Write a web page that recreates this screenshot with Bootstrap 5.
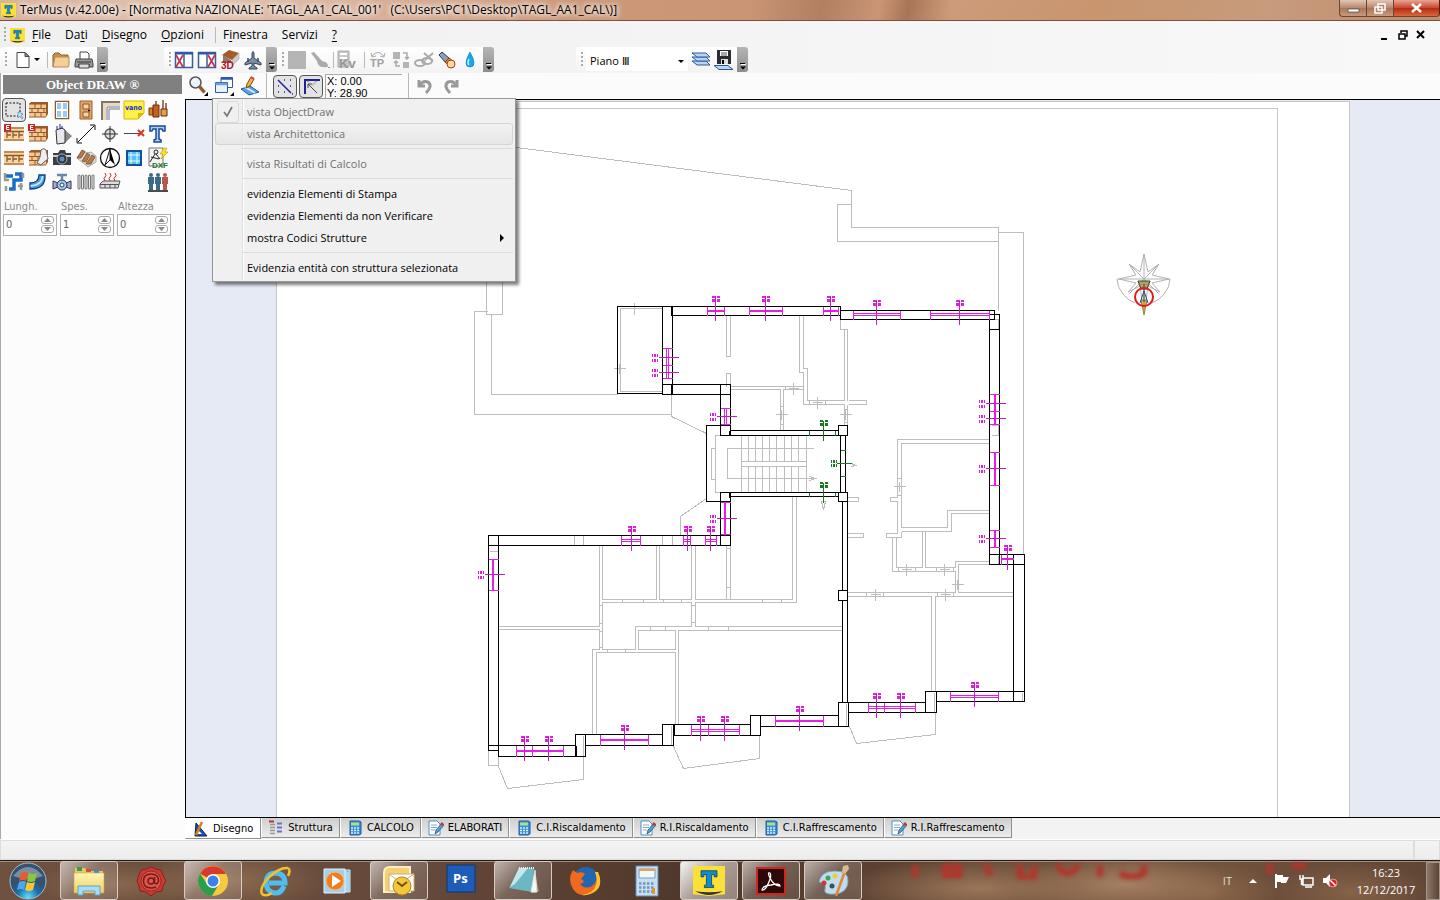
<!DOCTYPE html>
<html lang="it">
<head>
<meta charset="utf-8">
<meta name="viewport" content="width=device-width, initial-scale=1">
<title>TerMus</title>
<link href="https://cdn.jsdelivr.net/npm/bootstrap@5.3.0/dist/css/bootstrap.min.css" rel="stylesheet">
<script defer src="https://cdn.jsdelivr.net/npm/bootstrap@5.3.0/dist/js/bootstrap.bundle.min.js"></script>
<style>
body{font:12px/16px "Open Sans","Noto Sans",sans-serif;color:#000;background:#f4f4f4}
button{border:0;background:none;padding:0;color:inherit;font:inherit}
svg{display:block;flex:none}
.ui-11{font-size:11px}
.tahoma{font:11px/14px "DejaVu Sans Condensed","Liberation Sans",sans-serif}
.ic{width:20px;height:20px}.ic32{width:34px;height:34px}
.titlebar{height:21px;padding-left:1px;background:linear-gradient(100deg,#d9b39b 0,#e0c2b0 14%,#d4a68a 33%,#cc9878 40%,#c99575 52%,#b27f62 57%,#c99575 61%,#a97558 63%,#cd9b7a 66%,#c8956f 76%,#c79b7c 88%,#c08c6c);border-bottom:1px solid #77503f}
.titlebar .cap{white-space:pre;text-shadow:0 0 6px #fff,0 0 8px #fff,0 0 4px #fff}
.winbtns button{height:17px;border:1px solid #6c4534;border-top:0;border-right:0;background:linear-gradient(#e3c6b4,#b4866a 50%,#a97658 52%,#c79a7e);width:27px}
.winbtns button:last-child{width:47px;border-right:1px solid #5a1a10;border-radius:0 0 4px 0;background:linear-gradient(#e8a695,#c8452b 50%,#b32c12 52%,#d9683c)}
.winbtns button:first-child{border-radius:0 0 0 4px}
.menubar{height:26px;padding:2px 6px 0 4px;background:linear-gradient(90deg,#f0f0f0,#f8f8f8)}
.menubar a{color:#000;text-decoration:none;padding:0 7px}
.menubar u{text-underline-offset:2px}
.grip{width:2px;height:16px;background:repeating-linear-gradient(#aaa 0 2px,transparent 2px 4px);flex:none}
.vsep{width:1px;height:16px;background:#b9b9b9;flex:none}
.bars{height:26px;background:linear-gradient(90deg,#f0f0f0,#f8f8f8)}
.tbar{height:25px;gap:3px;border-radius:3px;background:linear-gradient(#fff,#f3f3f3);padding-left:5px}
.bar-nav{margin-left:56px}
.bar-floor{margin-left:82px}
.more{width:11px;height:25px;align-self:stretch;background:linear-gradient(#b5b5b5,#8d8d8d);border-radius:0 3px 3px 0}
.floor{display:block;width:102px;height:22px;border:0;background:#fff;appearance:none;padding:1px 4px 0;font:11px/21px "Open Sans","Noto Sans",sans-serif}
.side{width:185px;background:#fcfcfc;border-left:1px solid #aaa}
.side h1{font:bold 13px/19px "Liberation Serif",serif;background:#808080;color:#fff;margin:2px 3px 4px 2px;height:19px;text-align:center}
.tools{display:grid;grid-template-columns:repeat(7,24px);grid-auto-rows:24px;padding-left:1px}
.tools button.on,.view button.on{border:1px solid #555;border-radius:4px;background:#e3e3e3}
.tools button{display:grid;place-items:center}
.side label{color:#8b8b8b;font:11px/14px "DejaVu Sans Condensed",sans-serif;padding-left:1px}
.spin{border:1px solid #b0b0b0;height:22px;width:54px;background:#fff}
.spin input{width:37px;border:0;padding:0 2px;background:none;color:#666;font:11px/18px "DejaVu Sans Condensed",sans-serif}
.flds{gap:3px;padding:0 0 0 2px}
.spin button{width:13px;height:8px;border:1px solid #aaa;border-radius:3px;display:grid;place-items:center;margin-top:1px}
.view{height:26px;gap:6px;background:#fbfbfb;padding-left:3px}
.view .pair{gap:2px}
.view .on{width:24px;height:23px}
.view .on svg{width:22px;height:21px}
.xy{width:77px;height:25px;border:1px solid #aaa;border-right:0;font:11px/12px "Liberation Sans",sans-serif;padding:0 1px}
.canvasbox{border:1px solid #000;border-right:0;background:#e6eaf4;min-height:0}
.canvasbox>svg{width:100%;height:100%}
.ctx{left:27px;top:25px;width:304px;height:184px;border:1px solid #979797;box-shadow:3px 3px 3px rgba(0,0,0,.5);padding:2px;z-index:5;background:linear-gradient(90deg,#f0f0f0 29px,#dedede 29px 30px,#fff 30px 31px,#f0f0f0 31px)}
.ctx button{display:flex;align-items:center;width:100%;height:22px;padding-left:31px;border:1px solid transparent;text-align:left;position:relative}
.ctx button:disabled{color:#707070}
.ctx .hov{border-color:#d5d5d5;border-radius:3px;background:linear-gradient(#f3f3f380,#e3e3e3c0)}
.ctx hr{margin:3px 0 4px 28px;border:0;border-top:1px solid #dcdcdc;opacity:1}
.ctx .chk{position:absolute;left:1px;top:-1px;width:22px;height:22px;border:1px solid #dadada;border-radius:3px}
.tabsrow{height:21px;background:#f3f3f3}
.tabsrow button{height:20px;display:flex;align-items:center;padding:0 6px;gap:4px;background:linear-gradient(#cfcfcf,#ececec);border:1px solid #8e8e8e;border-top:0;border-left-color:#fff;white-space:nowrap}
.tabsrow button svg{width:16px;height:16px}
.tabsrow button.active{height:21px;background:#fff;padding:1px 7px 0}
.statusbar{height:21px;background:#fff;padding-top:1px}
.statusbar div{border:1px solid #ddd;background:linear-gradient(#f4f4f4,#ececec)}
.statusbar .endbox{width:26px}
.task{height:40px;border-top:1px solid #2a1a12;background:radial-gradient(80px 22px at 8% 60%,#89684f,transparent),radial-gradient(100px 30px at 16% 50%,#8b6a50,transparent),radial-gradient(140px 30px at 68% 70%,#9a7558,transparent),radial-gradient(110px 30px at 78% 60%,#a68062,transparent),radial-gradient(70px 30px at 84% 80%,#8a6649,transparent),radial-gradient(80px 30px at 94% 80%,#866248,transparent),linear-gradient(90deg,#6f5140,#64483a 30%,#4f372b 48%,#5a4031 60%,#76563f 80%,#5f4535);box-shadow:inset 0 1px #a58b7b}
.task .app{width:62px;height:39px;display:grid;place-items:center}
.task .start{width:56px}
.task .run{width:58px;margin:0 2px;border:1px solid #d8cbc2;border-radius:3px;background:linear-gradient(135deg,#ffffff99,#ffffff30 45%,#ffffff18)}
.task .cur{background:linear-gradient(135deg,#fffffff0,#ffffff80 50%,#ffffff60)}
.clock{color:#fff;text-align:center;line-height:17px;width:64px}
.lang{color:#ddd}
.showdesk{width:14px;height:38px;border:1px solid #a8958a!important;background:linear-gradient(90deg,#8d7767,#5a4435)!important}
.redlights{right:110px;top:0;height:18px;width:430px;filter:blur(2px)}
</style>
</head>
<body class="d-flex flex-column vh-100 overflow-hidden">
<svg width="0" height="0" class="position-absolute" aria-hidden="true">
<defs>
<linearGradient id="gy" x2="0" y2="1"><stop stop-color="#fff6b8"/><stop offset="1" stop-color="#f0cf60"/></linearGradient>
<symbol id="logo" viewBox="0 0 16 16"><path d="M0 0h16v15L8 16 0 15z" fill="#fbe03a"/><path d="M1 13.500q7 1 14 0-4 2-7 2t-7-2z" fill="#333"/><path d="M4 2.500h8v3.300h-1.400V4.600H9.300v5.600h1v1.300H5.700v-1.300h1V4.600H5.400v1.200H4z" fill="#0b8fd0" stroke="#1a3a50" stroke-width=".4"/></symbol>
<symbol id="more" viewBox="0 0 11 25"><path d="M3 16.500h5" stroke="#000"/><path d="M3 19.500h6l-3 3z"/><path d="M4 17.500h5" stroke="#fff"/></symbol>
<symbol id="new" viewBox="0 0 20 20"><path d="M3 2.500h8l4 4v11H3z" fill="#fff" stroke="#444"/><path d="M11 2.500v4h4z" fill="#a8a" stroke="#444"/></symbol>
<symbol id="open" viewBox="0 0 20 20"><path d="M2 17V5l2-2h4l2 2h7v3" fill="#c98e4a" stroke="#8c6231"/><path d="M2 17L4 7h14v8l-1 2z" fill="#f4cf97" stroke="#bb8a4e"/></symbol>
<symbol id="print" viewBox="0 0 20 20"><path d="M6 9V2h7l2 2v5" fill="#fff" stroke="#444"/><path d="M2 9h16l1 5v3H1v-3z" fill="#9a9a9a" stroke="#444"/><path d="M3 12h14M4 15h12" stroke="#333"/><path d="M5 14h10v4H5z" fill="#ddd" stroke="#444"/></symbol>
<symbol id="winl" viewBox="0 0 20 20"><path d="M1.500 2.500h17v15h-17z" fill="#fff" stroke="#3b5d9c" stroke-width="1.500"/><path d="M1 3.500h18" stroke="#2958a8" stroke-width="2"/><path d="M10 3v14.500" stroke="#3b5d9c" stroke-width="1.500"/><path d="M2 5l7 12M9 5L2 17" stroke="#c83248" stroke-width="1.700"/></symbol>
<symbol id="house" viewBox="0 0 20 20"><path d="M2 5L9 0l10 3-7 7z" fill="#a65b25"/><path d="M12 10l7-7v6l-6 6z" fill="#ccc" stroke="#999" stroke-width=".5"/><path d="M3 5l8 5v3H3z" fill="#8d7a6a"/><text x="1" y="19" font-family="Liberation Sans" font-weight="bold" font-size="10" fill="#b4101c">3D</text></symbol>
<symbol id="plane" viewBox="0 0 20 20"><path d="M9 3q1-3 2 0v5l7 5v2l-7-2v3l3 2v1H6v-1l3-2v-3l-7 2v-2l7-5z" fill="#7c8fa5" stroke="#32465f"/><path d="M5 8v4M15 8v4" stroke="#32465f" stroke-width="1.500"/></symbol>
<symbol id="gsq" viewBox="0 0 20 20"><path d="M1 1h18v18H1z" fill="#b5b5b5"/></symbol>
<symbol id="gbrush" viewBox="0 0 20 20"><path d="M1 3l3-1 8 9q6 1 6 5 0 2-5 1-5 0-6-6z" fill="#aaa"/><path d="M18 17h2v1h-2z" fill="#999"/></symbol>
<symbol id="kv" viewBox="0 0 20 20"><path d="M1 1h11v16H1z" fill="#c8c8c8" stroke="#aaa"/><path d="M3 4h7M3 8h7M3 12h3" stroke="#fff" stroke-width="2"/><text x="2" y="18" font-family="Liberation Sans" font-weight="bold" font-size="13" fill="#969696">Kv</text></symbol>
<symbol id="tp" viewBox="0 0 20 20"><text x="2" y="17" font-family="Liberation Sans" font-weight="bold" font-size="11" fill="#a2a2a2">TP</text><path d="M4 6q6-7 12 0M3 3l1 4 4-1M17 3l-1 4-4-1" fill="none" stroke="#aaa"/></symbol>
<symbol id="swap" viewBox="0 0 20 20"><path d="M2 2h7v7H2zM12 12h6v6h-6z" fill="#b4b4b4"/><path d="M12 3h4v6M14 7l2 2 2-2M9 16H5v-5M3 13l2-2 2 2" fill="none" stroke="#aaa" stroke-width="1.500"/></symbol>
<symbol id="link" viewBox="0 0 20 20"><ellipse cx="6" cy="13" rx="5" ry="3" fill="none" stroke="#aaa" stroke-width="2"/><ellipse cx="13" cy="11" rx="5" ry="3" fill="none" stroke="#aaa" stroke-width="2"/><path d="M10 3l9 8M19 3l-8 7" stroke="#aaa" stroke-width="2"/></symbol>
<symbol id="torch" viewBox="0 0 20 20"><path d="M2 5l3-3 8 7-4 4z" fill="#8ea0b8" stroke="#334"/><path d="M8 12l4-4 4 3-4 5z" fill="#e58a1f" stroke="#8d3e10"/><circle cx="14" cy="14" r="4" fill="#ffd9a0" stroke="#a04010"/></symbol>
<symbol id="drop" viewBox="0 0 20 20"><path d="M10 2q4 7 4 11a4 4 0 0 1-8 0q0-4 4-11z" fill="#18a9e8" stroke="#0b6fae" stroke-width=".6"/><path d="M9 9q-2 4 0 6" stroke="#c8f2ff" stroke-width="1.500" fill="none"/></symbol>
<symbol id="layers" viewBox="0 0 20 20"><path id="lay" d="M1 11h14l4 4H6z" fill="#b8d4f2" stroke="#2d5a96"/><use href="#lay" y="-4"/><use href="#lay" y="-8"/></symbol>
<symbol id="lsave" viewBox="0 0 20 20"><path d="M3 0h14v14H3z" fill="#2b2b33"/><path d="M6 1h8v5H6z" fill="#fff"/><path d="M7 3h6M7 5h6" stroke="#555"/><path d="M7 9h7v5H7z" fill="#ddd"/><path d="M8 10h2v4H8z"/><path d="M0 15.500h14l5 4H5z" fill="#b8d4f2" stroke="#2d5a96"/></symbol>
<symbol id="lens" viewBox="0 0 20 20"><circle cx="7.500" cy="6.500" r="5.500" fill="#eef3f7" stroke="#555" stroke-width="1.500"/><path d="M11.500 10.500l5 6" stroke="#8b5a2e" stroke-width="3.500"/><path d="M20 16v4h-4z"/></symbol>
<symbol id="wins" viewBox="0 0 20 20"><path d="M7 1.500h11.500v10H7z" fill="#fff" stroke="#2b5ba8"/><path d="M7 2.500h11.500" stroke="#2b5ba8" stroke-width="2.500"/><path d="M1.500 6.500h12v10h-12z" fill="#e9f2fc" stroke="#2b5ba8"/><path d="M1.500 8h12" stroke="#6ea0dd" stroke-width="2.500"/><path d="M20 16v4h-4z"/></symbol>
<symbol id="edit" viewBox="0 0 20 20"><path d="M1 13l9-3 9 6-10 3z" fill="#5aa2e6" stroke="#1c5ba4"/><path d="M5 11l10 6" stroke="#d8ecff" stroke-width="2"/><path d="M6 12l1-4 4-7 3 2-4 7z" fill="#f3b53a" stroke="#7a4510"/><path d="M11 1l3 2" stroke="#d04040" stroke-width="2"/></symbol>
<symbol id="snap" viewBox="0 0 22 21"><path d="M4 4l13 13" stroke="#20209a" stroke-width="1.500"/><path d="M4 10h1M4 16h1M10 4h1M16 4h1M16 10h1M10 16h1M18 18h1" stroke="#20209a" stroke-width="1.500"/></symbol>
<symbol id="ortho" viewBox="0 0 22 21"><path d="M5 18V4h15" fill="none" stroke="#20209a" stroke-width="2"/><path d="M8 8l9 9M8 12V8h4" fill="none" stroke="#444"/><path d="M8 5q4 7 8 0" fill="none" stroke="#999" stroke-width="2" stroke-dasharray="1 1"/></symbol>
<symbol id="undo" viewBox="0 0 20 20"><path d="M4 4v6h6" fill="none" stroke="#999" stroke-width="3"/><path d="M5 9q3-5 8-3 5 4-2 11" fill="none" stroke="#999" stroke-width="3"/></symbol>
<symbol id="sel" viewBox="0 0 22 22"><path d="M3 4h14v13H3z" fill="none" stroke="#111" stroke-dasharray="2 1.500"/><path d="M15 13l5 2-2 1 2 3-1 1-2-3-2 2z" fill="#cfe6fb" stroke="#4f88bb" stroke-width=".7"/></symbol>
<symbol id="wall" viewBox="0 0 22 22"><path d="M2 5l2-2h17v12l-2 3H2z" fill="#9a5b2a"/><path d="M2 5h17v13H2z" fill="#f4c890"/><path d="M2 5h17M2 9.500h17M2 13.500h17M2 18h17M8 5v4M14 5v4M5 9v4M11 9v4M17 9v4M8 14v4M14 14v4" stroke="#97592a"/></symbol>
<symbol id="slab" viewBox="0 0 22 22"><path d="M1 5h20v12H1z" fill="#f8d6a6"/><path d="M1 5h20M1 17h20" stroke="#c68a4c" stroke-width="2"/><path d="M1 8.500h20M4 9v6M10 9v6M16 9v6M4 12h4M10 12h4M16 12h4" stroke="#8a5a2a" stroke-width="1.300"/></symbol>
<symbol id="ebad" viewBox="0 0 22 22"><path d="M1 1h7v7H1z" fill="#cf1f2a"/><path d="M6.500 2.500h-3v4h3M3.500 4.500h2.500" fill="none" stroke="#fff"/></symbol>
<symbol id="win" viewBox="0 0 22 22"><path d="M4.500 2.500h13v17h-13z" fill="#9dcaf5" stroke="#8a5a28" stroke-width="1.500"/><path d="M5.500 3.500h11v15h-11z" fill="none" stroke="#fff"/><path d="M11 3v16M5 11h12" stroke="#fff" stroke-width="2"/></symbol>
<symbol id="door" viewBox="0 0 22 22"><path d="M5 2h12v18H5z" fill="#e2a568" stroke="#9a5e28"/><path d="M8 5h6v5H8zM8 13h6v5H8z" fill="#f6d4a7" stroke="#8b5424"/><circle cx="14" cy="11.500" r="1"/></symbol>
<symbol id="corner" viewBox="0 0 22 22"><path d="M3 21V3h18" fill="none" stroke="#777" stroke-width="2"/><path d="M5.500 21V5.500H21" fill="none" stroke="#f1d6b0" stroke-width="3"/><path d="M8 21V8h13" fill="none" stroke="#57b"/><path d="M10 21V10h11" fill="none" stroke="#777"/></symbol>
<symbol id="vano" viewBox="0 0 22 22"><path d="M1 2h20v12l-6 6H1z" fill="#fff04a" stroke="#d8b800"/><path d="M21 14l-6 6v-6z" fill="#d8b800"/><text x="2" y="11" font-family="DejaVu Sans Condensed" font-weight="bold" font-size="7" fill="#1f2fc0">vano</text></symbol>
<symbol id="plug" viewBox="0 0 22 22"><path d="M2 9h4v7H2z" fill="#d6811c" stroke="#7a3a10"/><path d="M6 6h6v12H6z" fill="#c8601c" stroke="#6a2a10"/><path d="M16 1v10M9 2v5M19 4v8" stroke="#8a4a2a" stroke-width="1.500"/><path d="M14 10h6v7h-6z" fill="#e8a03c" stroke="#5f2510"/></symbol>
<symbol id="column" viewBox="0 0 22 22"><path d="M14 7l7 6-7 7z" fill="#888"/><path d="M5 7l6-2 3 2v13l-8 1z" fill="#e8e8e8" stroke="#333"/><path d="M6 3v3M9 1v5M11 3v3" stroke="#229"/></symbol>
<symbol id="meas" viewBox="0 0 22 22"><path d="M3 19L19 3M2 15v5h5M15 2h5v5" fill="none" stroke="#111"/></symbol>
<symbol id="target" viewBox="0 0 22 22"><circle cx="11" cy="11" r="5" fill="#ddd" stroke="#555" stroke-width="1.300"/><path d="M11 3v16M3 11h16" stroke="#333"/></symbol>
<symbol id="cutx" viewBox="0 0 22 22"><path d="M1 10.500h16" stroke="#544"/><path d="M15 7l6 6M21 7l-6 6" stroke="#d32" stroke-width="2"/></symbol>
<symbol id="text" viewBox="0 0 22 22"><path d="M3 3h15v5h-2l-1-2h-3v10l2 1v2H7v-2l2-1V6H6L5 8H3z" fill="#a8cdf7" stroke="#1a4a9b" stroke-width="1.500"/></symbol>
<symbol id="hand" viewBox="0 0 22 22"><path d="M10 16l3-6 1-7q5-4 6 4l1 5-4 3-3 3z" fill="#eee" stroke="#666"/></symbol>
<symbol id="cam" viewBox="0 0 22 22"><path d="M2 6h5l2-3h5l1 3h5v12H2z" fill="#3a3f4c"/><path d="M2 9h18" stroke="#ccc" stroke-width="2"/><circle cx="11" cy="12" r="5" fill="#333" stroke="#aab"/><circle cx="11" cy="12" r="2.500" fill="#5b8bd0"/></symbol>
<symbol id="stair" viewBox="0 0 22 22"><path d="M2 11l6-8 4 3 4-1 5 4v6l-8 5z" fill="#ddd" stroke="#aaa"/><path d="M2 11l5-8 3 2-4 6zM7 14l5-8 3 2-4 7zM11 17l6-9 3 2-4 7z" fill="#b87a46" stroke="#6c4726" stroke-width=".7"/></symbol>
<symbol id="north" viewBox="0 0 22 22"><circle cx="11" cy="11" r="9.500" fill="#fff" stroke="#111" stroke-width="1.300"/><path d="M11 2l5 16-5-5z"/><path d="M11 2L6 18l5-5z" fill="#fff" stroke="#111"/></symbol>
<symbol id="grid4" viewBox="0 0 22 22"><path d="M4 4h14v14H4z" fill="#54c3ef" stroke="#1450a0" stroke-width="2"/><path d="M8 5v12M14 5v12M5 8h12M5 14h12" stroke="#e6faff"/></symbol>
<symbol id="dxf" viewBox="0 0 22 22"><path d="M2 1h14v18H2z" fill="#f4f4f4" stroke="#777"/><circle cx="9" cy="5" r="2" fill="none" stroke="#222"/><path d="M8 7l-5 8M9 7l4 5M4 10l8 2" stroke="#222"/><path d="M17 1l-4 6h3l-2 5 7-7h-3l2-4z" fill="#ffe21a" stroke="#a88a00" stroke-width=".5"/><text x="5" y="21" font-family="Liberation Sans" font-weight="bold" font-size="8" fill="#187a2a">DXF</text></symbol>
<symbol id="pipes" viewBox="0 0 22 22"><path d="M3 5h7M12 3h6v6h-7v9H6" fill="none" stroke="#1a6fc4" stroke-width="3.500"/><path d="M2 2v6M1 9h5M18 12v7M15 15h5M3 15v5M20 2v5" stroke="#999" stroke-width="2.500"/></symbol>
<symbol id="elbow" viewBox="0 0 22 22"><path d="M12 4h6q1 14-15 14v-6q9 0 9-8z" fill="#4aa0ea" stroke="#123f84" stroke-width="1.300"/><path d="M15.500 5q0 9-12 10" fill="none" stroke="#cfeaff" stroke-width="1.500"/></symbol>
<symbol id="valve" viewBox="0 0 22 22"><path d="M2 10l5 2h8l5-2v8l-5-2H7l-5 2z" fill="#aac" stroke="#335"/><circle cx="11" cy="14" r="5" fill="#9bccf0" stroke="#235"/><circle cx="11" cy="14" r="2" fill="#fff" stroke="#246"/><path d="M11 9V4M6 4h10" stroke="#68a" stroke-width="2.500"/></symbol>
<symbol id="rad" viewBox="0 0 22 22"><path d="M4 5v12M7.500 5v12M11 5v12M14.500 5v12M18 5v12" stroke="#777" stroke-width="3" stroke-linecap="round"/><path d="M4 5v12M7.500 5v12M11 5v12M14.500 5v12M18 5v12" stroke="#eee" stroke-linecap="round"/></symbol>
<symbol id="heat" viewBox="0 0 22 22"><path d="M6 10q-2-3 0-4t0-4M11 10q-2-3 0-4t0-4M16 10q-2-3 0-4t0-4" fill="none" stroke="#c22"/><path d="M1 13l3-3h17l-2 7H1z" fill="#ddd" stroke="#555"/><path d="M1 13.500h19M6 13v4M11 13v4M16 13v4" stroke="#555"/></symbol>
<symbol id="people" viewBox="0 0 22 22"><path d="M1 20h20" stroke="#111" stroke-width="1.500"/><g id="man" fill="#3a6a88"><circle cx="4" cy="4" r="2"/><path d="M1 6h6v7H6v6H2v-6H1z"/></g><use href="#man" x="7"/><g fill="#b8584a"><circle cx="18" cy="4" r="2"/><path d="M15 6h6v7h-1v6h-4v-6h-1z"/></g></symbol>
<symbol id="tdraw" viewBox="0 0 16 16"><path d="M3 2l11 13H2z" fill="#1c4fc0" stroke="#123"/><path d="M5 9l4 4H5z" fill="#fff"/><path d="M9 1L3 14" stroke="#d88010" stroke-width="2.500"/></symbol>
<symbol id="tstr" viewBox="0 0 16 16"><path d="M1 1.500h5" stroke="#c03030" stroke-width="2"/><path d="M2 4.500h5M2 7.500h5M2 10.500h5M2 13.500h5" stroke="#999" stroke-width="1.500"/><path d="M9 3.500h5M9 7.500h5M9 11.500h5" stroke="#7070c8" stroke-width="2"/></symbol>
<symbol id="tcalc" viewBox="0 0 16 16"><path d="M3 1h9l2 1v12l-2 1H3z" fill="#3b8fd8" stroke="#1d5a98"/><path d="M4 2.500h8v3H4z" fill="#a9e08c"/><path d="M4 8h8M4 10.500h8M4 13h8" stroke="#d8f0ff" stroke-width="1.500" stroke-dasharray="2 1"/></symbol>
<symbol id="tdoc" viewBox="0 0 16 16"><path d="M1 1h8l3 3v11H1z" fill="#fff" stroke="#4f8fc4"/><path d="M3 5h6M3 7.500h6M3 10h4" stroke="#8ab"/><path d="M7 14l1-4 6-7 2 2-6 7z" fill="#4fa4e0" stroke="#245" stroke-width=".7"/><path d="M13 3l2 2" stroke="#c33" stroke-width="2.500"/></symbol>
<!-- window markers of the plan: cross line and dimension label -->
<g id="mh"><path d="M0-15v25" stroke="#c81ac8"/><path d="M-2.500-15v7M2.500-15v7" stroke="#e01fe0" stroke-width="3" stroke-dasharray="2 1 3 1"/></g>
<g id="mv"><path d="M-9 0h20" stroke="#c81ac8"/><path d="M-16-2.500h7M-16 2.500h7" stroke="#e01fe0" stroke-width="3" stroke-dasharray="1 1 2 1"/></g>
<g id="gh"><path d="M0-11V9" stroke="#177a1e"/><path d="M-2.500-12v7M2.500-12v7" stroke="#177a1e" stroke-width="3" stroke-dasharray="2 1 3 1"/></g>
<path id="cv" d="M0-6V6M-5 0H5"/><path id="chz" d="M-6 0H6M0-5V5"/>
</defs>
</svg>

<header class="titlebar d-flex align-items-center">
<svg width="15" height="15" class="me-1"><use href="#logo"/></svg>
<div class="cap flex-grow-1">TerMus (v.42.00e) - [Normativa NAZIONALE: 'TAGL_AA1_CAL_001'   (C:\Users\PC1\Desktop\TAGL_AA1_CAL\)]</div>
<div class="winbtns d-flex align-self-start">
<button aria-label="Riduci"><svg width="26" height="16"><path d="M8 9h11v3H8z" fill="#fff" stroke="#444" stroke-width=".7"/></svg></button><button aria-label="Ripristina"><svg width="26" height="16"><path d="M11 4h7v6h-7zM8 7h7v6H8z" fill="#b08468" stroke="#fff" stroke-width="1.500"/></svg></button><button aria-label="Chiudi"><svg width="45" height="16"><path d="M18 4l9 8M27 4l-9 8" stroke="#fff" stroke-width="2.500"/></svg></button>
</div>
</header>

<nav class="menubar d-flex align-items-center">
<span class="grip me-1"></span>
<svg width="15" height="15"><use href="#logo"/></svg>
<a href="#"><u>F</u>ile</a><a href="#">Da<u>t</u>i</a><a href="#"><u>D</u>isegno</a><a href="#"><u>O</u>pzioni</a><span class="vsep ms-1"></span><a href="#">F<u>i</u>nestra</a><a href="#">Servizi</a><a href="#"><u>?</u></a>
<div class="ms-auto d-flex gap-2 align-items-center">
<button aria-label="Riduci documento"><svg width="10" height="10"><path d="M1 9h6" stroke="#000" stroke-width="2"/></svg></button><button aria-label="Ripristina documento"><svg width="10" height="10"><path d="M3 3V1h6v5H7M1 4h6v5H1z" fill="none" stroke="#000" stroke-width="1.500"/></svg></button><button class="me-2" aria-label="Chiudi documento"><svg width="10" height="10"><path d="M1 1l7 7M8 1L1 8" stroke="#000" stroke-width="2"/></svg></button>
</div>
</nav>

<div class="bars d-flex align-items-start">
<div class="tbar d-flex align-items-center">
<span class="grip"></span>
<button aria-label="Nuovo" class="d-flex align-items-center ms-1"><svg class="ic"><use href="#new"/></svg><svg width="6" height="4"><path d="M0 0h6L3 3z"/></svg></button><span class="vsep ms-1"></span>
<button aria-label="Apri"><svg class="ic"><use href="#open"/></svg></button><button aria-label="Stampa"><svg class="ic"><use href="#print"/></svg></button><button class="more" aria-label="Altro"><svg width="11" height="25"><use href="#more"/></svg></button>
</div>
<div class="tbar bar-nav d-flex align-items-center">
<span class="grip"></span>
<button aria-label="Chiudi sinistra"><svg class="ic"><use href="#winl"/></svg></button><button aria-label="Chiudi destra"><svg class="ic" viewBox="0 0 20 20"><use href="#winl" width="20" height="20" transform="matrix(-1 0 0 1 20 0)"/></svg></button><button aria-label="Vista 3D"><svg class="ic"><use href="#house"/></svg></button><button aria-label="Volo"><svg class="ic"><use href="#plane"/></svg></button><button class="more" aria-label="Altro"><svg width="11" height="25"><use href="#more"/></svg></button>
</div>
<div class="tbar d-flex align-items-center">
<span class="grip"></span>
<button aria-label="Materiale"><svg class="ic"><use href="#gsq"/></svg></button><button aria-label="Pennello"><svg class="ic"><use href="#gbrush"/></svg></button><span class="vsep"></span><button aria-label="Kv"><svg class="ic"><use href="#kv"/></svg></button><span class="vsep ms-1"></span><button aria-label="TP"><svg class="ic"><use href="#tp"/></svg></button><button aria-label="Scambia"><svg class="ic"><use href="#swap"/></svg></button><button aria-label="Scollega"><svg class="ic"><use href="#link"/></svg></button><button aria-label="Torcia"><svg class="ic"><use href="#torch"/></svg></button><button aria-label="Goccia"><svg class="ic"><use href="#drop"/></svg></button><button class="more" aria-label="Altro"><svg width="11" height="25"><use href="#more"/></svg></button>
</div>
<div class="tbar bar-floor d-flex align-items-center">
<span class="grip"></span>
<div class="position-relative"><select class="floor" aria-label="Piano"><option>Piano Ⅲ</option></select><svg class="position-absolute end-0 top-50 me-1 pe-none" width="6" height="4"><path d="M0 0h6L3 3z"/></svg></div>
<button aria-label="Livelli"><svg class="ic"><use href="#layers"/></svg></button><button aria-label="Salva livello"><svg class="ic"><use href="#lsave"/></svg></button><button class="more" aria-label="Altro"><svg width="11" height="25"><use href="#more"/></svg></button>
</div>
</div>

<div class="d-flex flex-grow-1" style="min-height:0">
<aside class="side flex-shrink-0">
<h1>Object DRAW ®</h1>
<div class="tools">
<button class="on" aria-label="Seleziona"><svg width="22" height="22"><use href="#sel"/></svg></button><button aria-label="Muro"><svg width="22" height="22"><use href="#wall"/></svg></button><button aria-label="Finestra"><svg width="22" height="22"><use href="#win"/></svg></button><button aria-label="Porta"><svg width="22" height="22"><use href="#door"/></svg></button><button aria-label="Ponte termico"><svg width="22" height="22"><use href="#corner"/></svg></button><button aria-label="Vano"><svg width="22" height="22"><use href="#vano"/></svg></button><button aria-label="Generatore"><svg width="22" height="22"><use href="#plug"/></svg></button>
<button aria-label="Solaio esistente"><svg width="22" height="22"><use href="#slab"/><use href="#ebad"/></svg></button><button aria-label="Muro esistente"><svg width="22" height="22"><use href="#wall"/><use href="#ebad"/></svg></button><button aria-label="Pilastro"><svg width="22" height="22"><use href="#column"/></svg></button><button aria-label="Quota"><svg width="22" height="22"><use href="#meas"/></svg></button><button aria-label="Punto"><svg width="22" height="22"><use href="#target"/></svg></button><button aria-label="Taglia"><svg width="22" height="22"><use href="#cutx"/></svg></button><button aria-label="Testo"><svg width="22" height="22"><use href="#text"/></svg></button>
<button aria-label="Solaio"><svg width="22" height="22"><use href="#slab"/></svg></button><button aria-label="Muro ombra"><svg width="22" height="22"><use href="#wall"/><use href="#hand"/></svg></button><button aria-label="Foto"><svg width="22" height="22"><use href="#cam"/></svg></button><button aria-label="Scala"><svg width="22" height="22"><use href="#stair"/></svg></button><button aria-label="Nord"><svg width="22" height="22"><use href="#north"/></svg></button><button aria-label="Griglia"><svg width="22" height="22"><use href="#grid4"/></svg></button><button aria-label="DXF"><svg width="22" height="22"><use href="#dxf"/></svg></button>
<button aria-label="Tubazioni"><svg width="22" height="22"><use href="#pipes"/></svg></button><button aria-label="Gomito"><svg width="22" height="22"><use href="#elbow"/></svg></button><button aria-label="Valvola"><svg width="22" height="22"><use href="#valve"/></svg></button><button aria-label="Radiatore"><svg width="22" height="22"><use href="#rad"/></svg></button><button aria-label="Pannello radiante"><svg width="22" height="22"><use href="#heat"/></svg></button><span></span><button aria-label="Utenti"><svg width="22" height="22"><use href="#people"/></svg></button>
</div>
<div class="flds d-flex pt-1">
<div><label for="f1">Lungh.</label><div class="spin d-flex"><input id="f1" value="0"><div><button aria-label="Più"><svg width="7" height="4"><path d="M0 4l3.500-4L7 4z" fill="#888"/></svg></button><button aria-label="Meno"><svg width="7" height="4"><path d="M0 0l3.500 4L7 0z" fill="#888"/></svg></button></div></div></div>
<div><label for="f2">Spes.</label><div class="spin d-flex"><input id="f2" value="1"><div><button aria-label="Più"><svg width="7" height="4"><path d="M0 4l3.500-4L7 4z" fill="#888"/></svg></button><button aria-label="Meno"><svg width="7" height="4"><path d="M0 0l3.500 4L7 0z" fill="#888"/></svg></button></div></div></div>
<div><label for="f3">Altezza</label><div class="spin d-flex"><input id="f3" value="0"><div><button aria-label="Più"><svg width="7" height="4"><path d="M0 4l3.500-4L7 4z" fill="#888"/></svg></button><button aria-label="Meno"><svg width="7" height="4"><path d="M0 0l3.500 4L7 0z" fill="#888"/></svg></button></div></div></div>
</div>
</aside>

<main class="flex-grow-1 d-flex flex-column position-relative" style="min-width:0">
<div class="view d-flex align-items-center flex-shrink-0">
<button aria-label="Zoom"><svg class="ic"><use href="#lens"/></svg></button><button aria-label="Viste"><svg class="ic"><use href="#wins"/></svg></button><button aria-label="Modifica"><svg class="ic"><use href="#edit"/></svg></button><span class="vsep h-100"></span>
<div class="pair d-flex align-items-center"><button class="on" aria-label="Snap"><svg><use href="#snap"/></svg></button><button class="on" aria-label="Ortogonale"><svg><use href="#ortho"/></svg></button>
<div class="xy">X: 0.00<br>Y: 28.90</div></div><span class="vsep h-100"></span>
<button aria-label="Annulla"><svg class="ic"><use href="#undo"/></svg></button><button aria-label="Ripeti"><svg class="ic" viewBox="0 0 20 20"><use href="#undo" width="20" height="20" transform="matrix(-1 0 0 1 20 0)"/></svg></button>
</div>

<div class="canvasbox flex-grow-1">
<svg viewBox="186 100 1254 717" role="img" aria-label="Pianta del piano">
<path d="M276 101h1074v717H276z" fill="#fff"/>
<g transform="translate(.5 .5)" fill="none" stroke="#bdbdbd" shape-rendering="crispEdges">
<path d="M276 817V101h1073v716M276 108h1001v709" stroke="#c6c6c6"/>
<path d="M500 145l16 2 335 43v37M851 204h-14v37h161M851 227h147v83M998 232h25v322M486 270v44h16v-44M487 311h-13v103h197M491 314v80h126M671 394v22l35 17M706 498l-26 18v19"/>
<path d="M662 308H620v83h42M726 315v41h4v-41M726 386v-13h4v13M799 315v57h4v32h41M803 315v53h4v32h37M848 400h18v4h-18M840 319v10h7v71M844 329v71M844 404v21M847 404v21M730 386h73M730 389h50v41M783 430v-41h20M785 386v3M803 386v3M780 406h3M780 424h3M809 400v4M825 400v4M844 409h3M844 422h3"/>
<path d="M720 435h-5v57h5M715 448h-4v31h4M741 435v57M748 435v57M755 435v57M762 435v57M769 435v57M776 435v57M784 435v57M791 435v57M798 435v57M806 435v57M813 448h-86v30h88M809 476l6 2-6 2"/>
<path d="M741 461h65v5h-65z" fill="#fff"/>
<path d="M989 439h-92v58h-7v4h7v32h-11v4h15v-6M989 443h-88v84h46v-17h42M901 531h50v-18h38M892 537v34h63v21M896 537v30h26v-36M925 531v36h30v-6h34M989 564h-31v28M898 567v4M915 567v4M936 567v4M953 567v4M897 478h4M897 495h4"/>
<path d="M847 497h11v4h-11M847 533h16v4h-16M847 592h108M958 592h55M847 596h84v95M935 691v-95h78M866 592v4M883 592v4M937 592v4M953 592v4M989 319h9v10M991 425h7v10h-7M998 555v9M1013 555v9M821 501l2 8 2-8zM851 463l4 2-4 1"/>
<path d="M792 496v103H695M796 496v106H695v24h147M691 545v54h-32v-54M656 545v54h-54v-54M599 545v81H498M695 545v54M726 545v54M730 545v54M691 626v-24h-89v47h33v-23h56M599 629H498M599 629v20h-7v85M596 734v-82h79v72M678 724v-94h164M638 630h37v19h-37zM622 599v3M643 599v3M663 599v3M681 599v3M599 605h3M599 623h3M599 631h3M599 647h3M607 649v3M625 649v3M650 626v4M665 626v4M708 626v4M728 626v4M762 599v3M781 599v3M726 548h4M726 587h4M691 605h4M691 622h4"/>
<path d="M574 535v10M583 535v10M662 535v10M672 535v10M489 551h9M488 750v15h10v-15M498 766l9 22 76-9v-23M673 746l10 22 76-10v-23M849 726l7 17 79-9v-22M583 735v20M671 725v19M846 703v22M934 692v19M1022 692v8"/>
<use href="#cv" x="634" y="308"/><use href="#chz" x="619" y="368"/><use href="#cv" x="793" y="388"/><use href="#cv" x="817" y="402"/><use href="#chz" x="781" y="414"/><use href="#chz" x="845" y="414"/><use href="#chz" x="899" y="486"/><use href="#cv" x="906" y="569"/><use href="#cv" x="944" y="569"/><use href="#chz" x="957" y="584"/><use href="#cv" x="875" y="594"/><use href="#cv" x="945" y="594"/>
</g>
<g transform="translate(.5 .5)" fill="none" stroke="#000" shape-rendering="crispEdges">
<path d="M662 306h-45v87h45M662 306h10v88h-10zM672 306h168v9H672M840 310h154v9H840zM840 306v4M662 384h68v51h-10v-51M662 394h68M720 425h-14v76h14M720 425h10M730 430h108M730 435h108M730 492h108M730 496h108M838 425h9v10h-9zM838 492h9v9h-9zM840 435v57M845 435v57M842 501v89M847 501v89M838 590h9v10h-9zM842 600v102M847 600v102M838 702h10v24h-10zM838 715h-78v11h78M750 715h10v20h-10zM750 724h-77v11h77M662 724h11v21h-11zM662 734h-77v11h77M575 734h10v22h-10zM575 745H488v5h10M575 756h-77M488 745V535h242v10H488M498 535v221M720 545v-53h10v53M720 501h10M848 702h77M848 712h77M925 691h11v21h-11zM936 691h88M936 701h88V554h-35v10h35M1013 554v147M989 554V314h10v250M989 319v-5M989 329h10M672 384v10"/>
<path d="M671.500 306v9M671.500 384v10M729.500 430v5M729.500 492v5M673 724v11M575.500 745v11" stroke-width="2"/>
</g>
<g transform="translate(.5 .5)" fill="none" stroke="#e51fe5" shape-rendering="crispEdges">
<path d="M707 306v9M724 306v9M749 306v9M782 306v9M823 306v9M838 306v9M853 310v9M900 310v9M930 310v9M989 310v9M621 535v10M640 535v10M683 535v10M690 535v10M705 535v10M716 535v10M600 734v11M648 734v11M516 745v11M532 745v11M563 745v11M691 724v11M708 724v11M739 724v11M775 715v11M823 715v11M868 702v10M884 702v10M915 702v10M950 691v10M998 691v10M1001 554v10M662 348h10M662 365h10M662 378h10M720 408h10M720 424h10M720 502h10M720 534h10M488 559h10M488 590h10M989 394h10M989 411h10M989 424h10M989 452h10M989 485h10M989 530h10M989 547h10"/>
<path d="M853 313h47M853 315h47M930 313h59M930 315h59M621 539h19M621 541h19M683 539h7M683 541h7M705 539h11M705 541h11M691 729h48M691 731h48M868 706h47M868 708h47M950 695h48M950 697h48M666 348v30M668 348v30M724 408v16M726 408v16"/>
<path d="M707 310.500h17M749 310.500h33M823 310.500h15M600 739.500h48M516 750.500h47M775 720.500h48M1001 558.500h12M724.500 502v32M492.500 559v31M994.500 394v30M994.500 452v33M994.500 530v17" stroke-width="2"/>
<use href="#mh" x="715" y="310"/><use href="#mh" x="765" y="310"/><use href="#mh" x="830" y="310"/><use href="#mh" x="876" y="314"/><use href="#mh" x="959" y="314"/><use href="#mh" x="631" y="540"/><use href="#mh" x="687" y="540"/><use href="#mh" x="710" y="540"/><use href="#mh" x="624" y="739"/><use href="#mh" x="524" y="750"/><use href="#mh" x="548" y="750"/><use href="#mh" x="700" y="730"/><use href="#mh" x="724" y="730"/><use href="#mh" x="799" y="720"/><use href="#mh" x="876" y="707"/><use href="#mh" x="900" y="707"/><use href="#mh" x="974" y="696"/><use href="#mh" x="1007" y="559"/>
<use href="#mv" x="667" y="357"/><use href="#mv" x="667" y="372"/><use href="#mv" x="725" y="416"/><use href="#mv" x="725" y="518"/><use href="#mv" x="493" y="574"/><use href="#mv" x="994" y="403"/><use href="#mv" x="994" y="418"/><use href="#mv" x="994" y="468"/><use href="#mv" x="994" y="538"/>
</g>
<g transform="translate(.5 .5)" stroke="#177a1e" shape-rendering="crispEdges"><use href="#gh" x="823" y="431"/><use href="#gh" x="823" y="493"/><path d="M809 430v5M835 430v5M809 492v4M835 492v4M840 450h5M840 476h5M836 463h15"/><path d="M830 461h7M830 465h7" stroke-width="3" stroke-dasharray="1 1 2 1"/></g>
<g fill="none" stroke="#b2b2b2"><path d="M1117 279h53q0 8-6 15-4 6-12 9M1117 279q0 8 6 15 4 6 12 9"/><path d="M1144 254l4 18 11-8-7 11 17 4-17 4 8 9-12-6-4 28-4-28-12 6 8-9-17-4 17-4-7-11 11 8z"/><path d="M1144 254v60M1129 264l30 30M1159 264l-30 30"/><path d="M1141 300l3 15 3-15z" fill="#c8ad4c" stroke="#998840"/><path d="M1138 281h12l-3 8h-6z" fill="#a8a070" stroke="#45452a"/><path d="M1144 284v18" stroke="#45452a"/><circle cx="1144" cy="297" r="9" stroke="#e01818" stroke-width="2"/><path d="M1140 303l4-12 4 12" stroke="#2b4a9e"/></g>
</svg>
</div>

<div class="ctx position-absolute ui-11" role="menu">
<button disabled><span class="chk"><svg width="20" height="20"><path d="M6 10l3 4 5-9" fill="none" stroke="#777" stroke-width="1.700"/></svg></span>vista ObjectDraw</button>
<button disabled class="hov">vista Architettonica</button><hr>
<button disabled>vista Risultati di Calcolo</button><hr>
<button>evidenzia Elementi di Stampa</button><button>evidenzia Elementi da non Verificare</button>
<button>mostra Codici Strutture<svg class="ms-auto me-2" width="4" height="8"><path d="M0 0l4 4-4 4z"/></svg></button><hr>
<button>Evidenzia entità con struttura selezionata</button>
</div>

<div class="tabsrow tahoma d-flex flex-shrink-0" role="tablist">
<button class="active" role="tab" aria-selected="true"><svg><use href="#tdraw"/></svg>Disegno</button><button role="tab"><svg><use href="#tstr"/></svg>Struttura</button><button role="tab"><svg><use href="#tcalc"/></svg>CALCOLO</button><button role="tab"><svg><use href="#tdoc"/></svg>ELABORATI</button><button role="tab"><svg><use href="#tcalc"/></svg>C.I.Riscaldamento</button><button role="tab"><svg><use href="#tdoc"/></svg>R.I.Riscaldamento</button><button role="tab"><svg><use href="#tcalc"/></svg>C.I.Raffrescamento</button><button role="tab"><svg><use href="#tdoc"/></svg>R.I.Raffrescamento</button>
</div>
</main>
</div>

<div class="statusbar d-flex"><div class="flex-grow-1"></div><div class="endbox"></div></div>

<footer class="task d-flex align-items-center position-relative flex-shrink-0">
<svg class="redlights position-absolute" viewBox="0 0 430 18"><g fill="none" stroke="#b3342a" stroke-width="6"><path d="M15 4v12M45 6h14v8H45zM85 4l6 10M120 4v12h14V5M157 4q10 16 22 0M200 4v12M220 12q12 8 24 0V4M370 3v10M392 5h14"/></g></svg>
<button class="app start" aria-label="Start"><svg width="38" height="38" viewBox="0 0 38 38"><defs><radialGradient id="orb" cy=".95"><stop stop-color="#5ee0ff"/><stop offset=".6" stop-color="#1d6fae"/><stop offset="1" stop-color="#33526e"/></radialGradient></defs><circle cx="19" cy="19" r="18" fill="url(#orb)" stroke="#9dc0d6"/><path d="M4 14q15-18 30 0-14 6-30 0z" fill="#fff" opacity=".35"/><path d="M12 11q4-2 7 0l-2 8q-3-2-7 0z" fill="#ee5a24"/><path d="M20 11q4 2 8 0l-2 8q-4 2-8 0z" fill="#8cc63f"/><path d="M10 20q4-2 7 0l-2 8q-3-2-7 0z" fill="#4aa8f0"/><path d="M18 20q4 2 8 0l-2 8q-4 2-8 0z" fill="#fdc82f"/></svg></button>
<button class="app run ms-1" aria-label="Esplora risorse"><svg class="ic32" viewBox="0 0 34 34"><path d="M3 4h10l2 3h16v22H3z" fill="#e6c869"/><path d="M5 3h5v4H5z" fill="#2f9e4a"/><path d="M14 5h5v3h-5z" fill="#d8502c"/><path d="M22 6h5v3h-5z" fill="#3b8fd0"/><path d="M2 9h30v20H2z" fill="url(#gy)" stroke="#c9a545" stroke-width=".6"/><path d="M6 31V22h22v9h-5v-4H11v4z" fill="#a9dcf4" stroke="#5aa6cc"/></svg></button>
<button class="app" aria-label="Posta certificata"><svg class="ic32" viewBox="0 0 34 34"><path d="M17 3l5 2 5 1 2 5 3 6-3 5-1 5-6 1-5 4-5-4-6-1-1-5-2-5 2-6 2-5 5-1z" fill="#c93a32" stroke="#8c1f1b"/><circle cx="17" cy="17" r="10" fill="#d8584d" stroke="#9a2822"/><circle cx="17" cy="17" r="3" fill="none" stroke="#7c1814" stroke-width="1.500"/><path d="M20.500 13v6q3 2 4-2 0-7-7.500-7t-7.500 7 7.500 7q3 0 5-1" fill="none" stroke="#7c1814" stroke-width="1.500"/></svg></button>
<button class="app run" aria-label="Chrome"><svg class="ic32" viewBox="0 0 34 34"><circle cx="17" cy="17" r="15" fill="#f7ca3e"/><path d="M17 17L4 9.500A15 15 0 0 1 30 10H17z" fill="#d9392c"/><path d="M4 9.500A15 15 0 0 0 16 32l6.500-11L17 17l-6 3z" fill="#2c9d4c"/><circle cx="17" cy="17" r="7" fill="#fff"/><circle cx="17" cy="17" r="5.500" fill="#3f7de8"/></svg></button>
<button class="app" aria-label="Internet Explorer"><svg class="ic32" viewBox="0 0 34 34"><path d="M26 22q-3 8-10 7-8-2-8-11 1-9 10-9 9 1 9 10H11" fill="none" stroke="#4fbdf0" stroke-width="5"/><path d="M30 4Q22 3 11 13 1 24 4 30q4 3 10-1" fill="none" stroke="#f3c22b" stroke-width="2.500"/><path d="M30 4q3 2 0 8" fill="none" stroke="#f3c22b" stroke-width="2.500"/></svg></button>
<button class="app" aria-label="Media Player"><svg class="ic32" viewBox="0 0 34 34"><path d="M22 6h8v22h-8z" fill="#6bb6e2" stroke="#d8f0ff"/><path d="M26 7v21M28 8v19" stroke="#e8f8ff"/><path d="M4 5h21v24H4z" fill="#a7cfe8" stroke="#e4f3fc"/><circle cx="15" cy="17" r="9" fill="#ef7d22" stroke="#fbb97c"/><path d="M12 11l9 6-9 6z" fill="#fff"/></svg></button>
<button class="app run" aria-label="Outlook"><svg class="ic32" viewBox="0 0 34 34"><path d="M2 9q0-6 6-6h20v25H2z" fill="#f5cf72" stroke="#fff0c4" stroke-width="2"/><path d="M7 10h25v17H7z" fill="#fff" stroke="#d0b060"/><path d="M7 10l12 9 13-9" fill="none" stroke="#d0b060"/><circle cx="20" cy="22" r="9" fill="#f4c73a" stroke="#b08418"/><path d="M15 18l5 4 5-4" fill="none" stroke="#715009" stroke-width="2"/></svg></button>
<button class="app" aria-label="Photoshop"><svg class="ic32" viewBox="0 0 34 34"><path d="M3 1h28v27H3z" fill="#1d5cb8" stroke="#0d3672"/><text x="9" y="19" font-family="Open Sans" font-weight="bold" font-size="13" fill="#fff">Ps</text></svg></button>
<button class="app run" aria-label="Blocco note"><svg class="ic32" viewBox="0 0 34 34"><path d="M28 5l5 22-4 2h-4z" fill="#a98d55"/><path d="M13 4h15l-2 24-23-4z" fill="#6ab8c2"/><path d="M13 4h9L9 20l-5 3z" fill="#c3e8ea"/><path d="M25 28l4-22 2 22z" fill="#f4fafa" stroke="#ddd"/><path d="M13 4h15" stroke="#eee" stroke-width="2" stroke-dasharray="1 1"/></svg></button>
<button class="app" aria-label="Firefox"><svg class="ic32" viewBox="0 0 34 34"><circle cx="18" cy="16" r="13" fill="#2366ad"/><path d="M30 8q6 15-5 21-13 6-20-4Q-1 15 5 6l4 3q5-2 8 1l-4 5q4 1 2 4l-3 1q5 6 12 2 7-5 3-14z" fill="#ee6a1e"/><path d="M30 8q6 14-4 20-6 4-12 3 12-2 14-10 2-6-1-13z" fill="#fbc531"/></svg></button>
<button class="app" aria-label="Calcolatrice"><svg class="ic32" viewBox="0 0 34 34"><path d="M6 2h22v30H6z" fill="#c5dff5" stroke="#5d8dbb"/><path d="M9 5h16v9H9z" fill="#f2f7fb" stroke="#799bbd"/><path d="M9 5h16v2H9z" fill="#e9a43e"/><path d="M9 19.500h16M9 23.500h16M9 27.500h16" stroke="#7895b8" stroke-width="2.500" stroke-dasharray="2.500 1.500"/><path d="M23.500 24v6" stroke="#e9952a" stroke-width="3"/></svg></button>
<button class="app run cur" aria-label="TerMus"><svg width="32" height="30" viewBox="0 0 16 16" preserveAspectRatio="none"><use href="#logo" width="16" height="16"/></svg></button>
<button class="app run" aria-label="Acrobat"><svg class="ic32" viewBox="0 0 34 34"><path d="M3 4h28v26H3z" fill="#2d0808" stroke="#d0261c" stroke-width="2"/><path d="M16 9q-3-1 0 5 4 8 10 8 0-3-9-1-9 1-9 5 3 1 6-6 4-8 2-11z" fill="none" stroke="#fff" stroke-width="1.300"/></svg></button>
<button class="app run" aria-label="Paint"><svg class="ic32" viewBox="0 0 34 34"><path d="M3 18Q5 7 19 7t13 11-13 12-10-5-6-7z" fill="#c3dced" stroke="#7da7c4"/><circle cx="8" cy="19" r="2.500" fill="#d33"/><circle cx="12" cy="14" r="2.500" fill="#3a5"/><circle cx="19" cy="12" r="2.500" fill="#ec3"/><circle cx="16" cy="22" r="2.500" fill="#355"/><path d="M29 7l-9 25" stroke="#d98a34" stroke-width="2.500"/><path d="M26 8l1-6 5-1 1 4-4 5z" fill="#dcb98c"/></svg></button>
<div class="ms-auto d-flex align-items-center position-relative text-white">
<span class="lang ui-11 me-3">IT</span>
<button aria-label="Icone nascoste" class="me-3"><svg width="10" height="6"><path d="M1 5l4-4 4 4z" fill="#fff"/></svg></button>
<svg width="16" height="16" class="me-2"><path d="M2 1v14" stroke="#fff" stroke-width="2"/><path d="M3 2h6v2h6l-3 6H7V9H3z" fill="#fff"/></svg>
<svg width="16" height="16" class="me-2"><path d="M5 5h10v7H5zM7 14h7M2 2v4h3V2M3.500 6v6" fill="none" stroke="#fff" stroke-width="1.500"/></svg>
<svg width="16" height="16" class="me-3"><path d="M1 5h3l4-4v13l-4-4H1z" fill="#fff"/><circle cx="11" cy="10" r="4" fill="#e02020" stroke="#fff" stroke-width=".5"/><path d="M8.500 7.500l5 5" stroke="#fff" stroke-width="1.500"/></svg>
<div class="clock ui-11">16:23<br>12/12/2017</div>
<button class="showdesk ms-2" aria-label="Mostra desktop"></button>
</div>
</footer>
</body>
</html>
